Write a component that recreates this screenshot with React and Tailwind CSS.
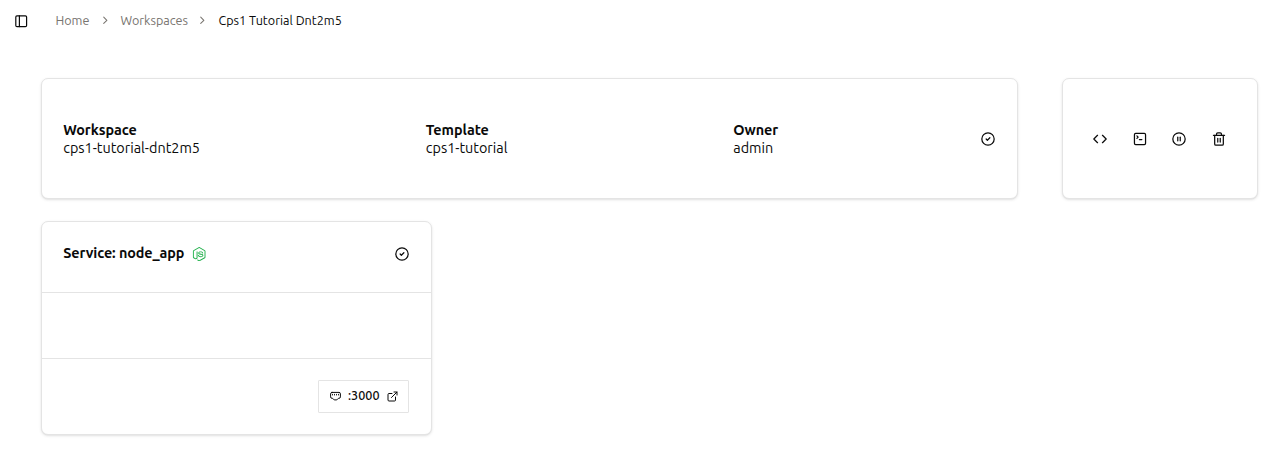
import { PanelLeft, ChevronRight, CircleCheck, Code, SquareTerminal, CirclePause, Trash2, ExternalLink } from 'lucide-react';
import { FaNodeJs } from 'react-icons/fa';

const card = 'rounded-[7px] border border-[#e4e4e4] bg-white shadow-sm';

function PortIcon() {
  return (
    <svg width="11" height="10" viewBox="0 0 11 10" fill="none" stroke="currentColor" strokeLinecap="round" strokeLinejoin="round" className="mt-px">
      <path d="M2 1.4h7a1.4 1.4 0 0 1 1.4 1.4v3.1A1.4 1.4 0 0 1 9 7.3h-.6L6.8 8.9H4.2L2.6 7.3H2A1.4 1.4 0 0 1 .6 5.9V2.8A1.4 1.4 0 0 1 2 1.4Z" />
      <path d="M2.5 3.3v.7M4.5 3.3v.7M6.5 3.3v.7M8.5 3.3v.7" strokeWidth="0.9" />
    </svg>
  );
}

function Field({ label, value, className }) {
  return (
    <div className={`${className} shrink-0 text-[14.4px] leading-[18px] whitespace-nowrap`}>
      <div className="font-semibold tracking-[-0.07px]">{label}</div>
      <div>{value}</div>
    </div>
  );
}

function Breadcrumbs() {
  return (
    <header className="flex h-[41px] items-center pl-[14px] text-[12.6px] whitespace-nowrap text-[#78746f]">
      <PanelLeft size={14.4} className="mt-px text-[#0a0a0a]" />
      <span className="ml-[27px] w-[43.5px]">Home</span>
      <ChevronRight size={12.6} className="mr-[9px]" />
      <span className="w-[76px]">Workspaces</span>
      <ChevronRight size={12.6} className="mr-[9.4px]" />
      <span className="text-[#0a0a0a]">Cps1 Tutorial Dnt2m5</span>
    </header>
  );
}

export default function App() {
  return (
    <div className="h-[458px] overflow-hidden bg-white font-['Ubuntu','Noto_Sans',sans-serif] text-[#0a0a0a]">
      <Breadcrumbs />
      <main className="pt-[37px] pl-[41px]">
        <div className="flex gap-[44px]">
          <section className={`${card} flex h-[121px] w-[977px] items-center pl-[21.2px]`}>
            <Field label="Workspace" value="cps1-tutorial-dnt2m5" className="w-[362.6px]" />
            <Field label="Template" value="cps1-tutorial" className="w-[307.5px]" />
            <Field label="Owner" value="admin" className="w-[246.7px]" />
            <CircleCheck size={16} className="p-[0.6px]" />
          </section>
          <section className={`${card} flex h-[121px] w-[196px] items-center pl-[29px]`}>
            <Code size={16} className="mr-[24px] p-[0.6px]" />
            <SquareTerminal size={16} className="mr-[23px] p-[0.6px]" />
            <CirclePause size={16} className="mr-[24px] p-[0.6px]" />
            <Trash2 size={16} className="p-[0.6px]" />
          </section>
        </div>
        <section className={`${card} mt-[22px] h-[214px] w-[391px]`}>
          <div className="flex h-[70px] items-center pr-[21px] pb-[6px] pl-[21.2px]">
            <h2 className="w-[128.8px] pb-[2px] text-[14.4px] leading-[18px] font-semibold tracking-[-0.09px] whitespace-nowrap">Service: node_app</h2>
            <FaNodeJs size={14.4} className="text-[#22b14c]" />
            <CircleCheck size={16} className="ml-auto p-[0.6px]" />
          </div>
          <div className="h-[67px] border-y border-[#e4e4e4]" />
          <div className="flex justify-end pt-[21px] pr-[22px]">
            <button className="flex h-[33px] w-[91px] items-center rounded-[1px] border border-[#e4e4e4] pb-[2px] pl-[11px] text-[12.6px] font-medium">
              <PortIcon />
              <span className="ml-[7px] w-[38px] text-left">:3000</span>
              <ExternalLink size={13} className="mt-[2px] p-[0.5px]" />
            </button>
          </div>
        </section>
      </main>
    </div>
  );
}
